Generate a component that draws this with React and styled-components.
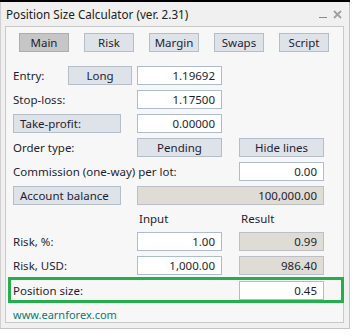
import React from 'react';
import styled, { createGlobalStyle } from 'styled-components';

const Global = createGlobalStyle`
  body {
    margin: 0;
    background: #ffffff;
    font-family: "Noto Sans", "DejaVu Sans", sans-serif;
  }
`;

const Window = styled.div`
  width: 350px;
  height: 329px;
  box-sizing: border-box;
  border-top: 2px solid #000;
  background: #f0f0f0;
  display: flex;
  flex-direction: column;
  box-shadow: inset -1px -1px 0 #c4c4c4, inset 1px 0 0 #d0d0d0;
  padding: 0 6px 6px 5px;
`;

const TitleBar = styled.div`
  height: 26px;
  display: flex;
  align-items: center;
  justify-content: space-between;
  font-size: 11.7px;
  color: #202020;
  padding-left: 1px;
`;

const Controls = styled.div`
  display: flex;
  align-items: center;
  gap: 6px;
  padding-right: 2px;
`;

const Minimize = styled.span`
  width: 8px;
  height: 1px;
  background: #8a8a8a;
  margin-top: 6px;
`;

const Panel = styled.div`
  flex: 1;
  border: 1px solid #c9c9c9;
  background: #f7f7f7;
  padding: 6px 7px 0 7px;
  display: flex;
  flex-direction: column;
  font-size: 11.5px;
  color: #1e1e30;
`;

const Tabs = styled.div`
  display: flex;
  gap: 15px;
  margin-left: 6px;
  margin-bottom: 14px;
`;

const Tab = styled.div`
  width: 50px;
  height: 19px;
  box-sizing: border-box;
  display: flex;
  align-items: center;
  justify-content: center;
  background: ${p => (p.$active ? '#c6c6c6' : '#dee2e9')};
  border: 1px solid ${p => (p.$active ? '#adadad' : '#b5bdc8')};
`;

const Row = styled.div`
  display: flex;
  align-items: center;
  height: 19px;
  margin-bottom: ${p => p.$mb ?? 5}px;
`;

const Label = styled.div`
  width: ${p => p.$w}px;
  flex-shrink: 0;
  white-space: nowrap;
`;

const Button = styled.div`
  width: ${p => p.$w}px;
  height: 19px;
  box-sizing: border-box;
  flex-shrink: 0;
  margin-right: ${p => p.$mr ?? 0}px;
  display: flex;
  align-items: center;
  justify-content: ${p => (p.$left ? 'flex-start' : 'center')};
  padding-left: ${p => (p.$left ? 6 : 0)}px;
  background: #dee2e9;
  border: 1px solid #b5bdc8;
`;

const Field = styled.div`
  width: ${p => p.$w ?? 85}px;
  height: 19px;
  box-sizing: border-box;
  flex-shrink: 0;
  margin-right: ${p => p.$mr ?? 0}px;
  display: flex;
  align-items: center;
  justify-content: flex-end;
  padding-right: 6px;
  background: ${p => (p.$ro ? '#dedcd5' : '#ffffff')};
  border: 1px solid ${p => (p.$ro ? '#bcc0c6' : '#aebccb')};
`;

const Header = styled.div`
  width: ${p => p.$w}px;
  box-sizing: border-box;
  flex-shrink: 0;
  padding-left: ${p => p.$pl ?? 0}px;
`;

const Highlight = styled.div`
  display: flex;
  align-items: center;
  height: 26px;
  box-sizing: border-box;
  margin: 0 -8px 0 -5px;
  padding-left: 2px;
  border: 3px solid #25ae4c;
`;

const Link = styled.div`
  margin-top: 4px;
  font-size: 11px;
  color: #087a78;
`;

export default function App() {
  return (
    <>
      <Global />
      <Window>
        <TitleBar>
          <span>Position Size Calculator (ver. 2.31)</span>
          <Controls>
            <Minimize />
            <svg width="9" height="9" viewBox="0 0 9 9">
              <path d="M1 1L8 8M8 1L1 8" stroke="#a0a0a0" strokeWidth="1.8" />
            </svg>
          </Controls>
        </TitleBar>
        <Panel>
          <Tabs>
            <Tab $active>Main</Tab>
            <Tab>Risk</Tab>
            <Tab>Margin</Tab>
            <Tab>Swaps</Tab>
            <Tab>Script</Tab>
          </Tabs>
          <Row>
            <Label $w={55}>Entry:</Label>
            <Button $w={64} $mr={5}>Long</Button>
            <Field>1.19692</Field>
          </Row>
          <Row>
            <Label $w={124}>Stop-loss:</Label>
            <Field>1.17500</Field>
          </Row>
          <Row>
            <Button $w={108} $mr={16} $left>Take-profit:</Button>
            <Field>0.00000</Field>
          </Row>
          <Row>
            <Label $w={124}>Order type:</Label>
            <Button $w={85} $mr={17}>Pending</Button>
            <Button $w={85}>Hide lines</Button>
          </Row>
          <Row>
            <Label $w={226}>Commission (one-way) per lot:</Label>
            <Field>0.00</Field>
          </Row>
          <Row $mb={4}>
            <Button $w={108} $mr={16} $left>Account balance</Button>
            <Field $w={187} $ro>100,000.00</Field>
          </Row>
          <Row $mb={4}>
            <Header $w={226} $pl={126}>Input</Header>
            <Header $w={85} $pl={2}>Result</Header>
          </Row>
          <Row>
            <Label $w={124}>Risk, %:</Label>
            <Field $mr={17}>1.00</Field>
            <Field $ro>0.99</Field>
          </Row>
          <Row $mb={2}>
            <Label $w={124}>Risk, USD:</Label>
            <Field $mr={17}>1,000.00</Field>
            <Field $ro>986.40</Field>
          </Row>
          <Highlight>
            <Label $w={226}>Position size:</Label>
            <Field>0.45</Field>
          </Highlight>
          <Link>www.earnforex.com</Link>
        </Panel>
      </Window>
    </>
  );
}
